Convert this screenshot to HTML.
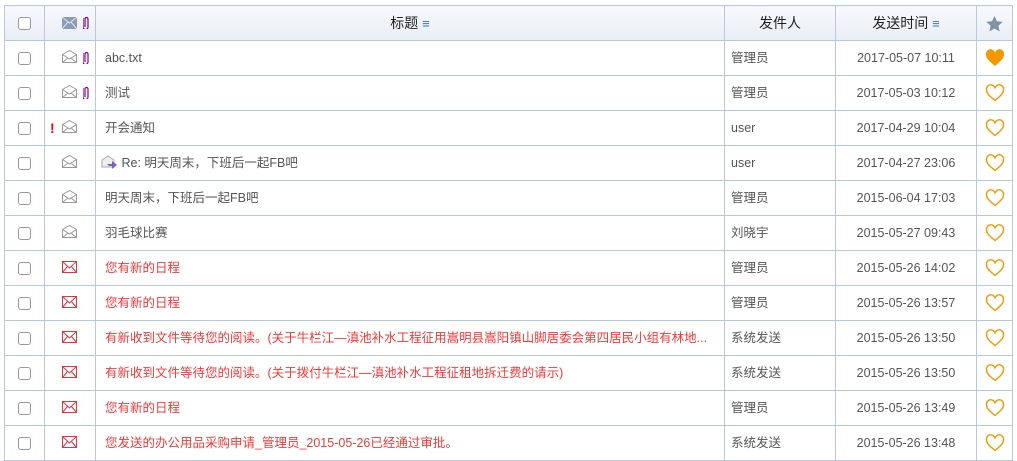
<!DOCTYPE html>
<html><head><meta charset="utf-8"><style>
body{margin:0;background:#fff;font-family:"Liberation Sans","Noto Sans CJK SC",sans-serif;font-size:12.5px;color:#555;}
table{position:absolute;left:4px;top:5px;border-collapse:collapse;table-layout:fixed;width:1009px;}
td,th{border:1px solid #b9c9dc;height:34px;padding:0;white-space:nowrap;overflow:hidden;vertical-align:middle;line-height:16px;}
th{background:linear-gradient(#f7f9fc,#e9eef5);font-weight:normal;font-size:14px;color:#222;}
.cb{display:block;margin:0 auto;width:11px;height:11px;border:1px solid #999;border-radius:3px;background:#fff}
.t{padding-left:9px}.r .t{color:#f03a3a}
.s{padding-left:6px}
.d{text-align:center}
.h{text-align:center}
.ic{position:relative}
.m{position:absolute;left:17px;top:11px}
.cl{position:absolute;left:38px;top:10px}
.ex{position:absolute;left:5px;top:9px;color:#e00;font-weight:bold;font-size:14px}
.menu{color:#3a76c4;font-size:13px}
</style></head><body>
<table>
<colgroup><col style="width:40px"><col style="width:51px"><col style="width:629px"><col style="width:111px"><col style="width:141px"><col style="width:36px"></colgroup>
<tr><th><span class="cb"></span></th><th class="ic"><svg class="m" style="left:17px;top:11px" width="15" height="12"><rect width="15" height="12" fill="#8a9bb3"/><path d="M0 0L7.5 6L15 0M0 12L6 5M15 12L9 5" stroke="#dfe6ef" fill="none"/></svg><svg class="cl" width="7" height="13"><path d="M2 11V3a1.5 1.5 0 0 1 3 0v8a2.5 2.5 0 0 1-5 0V2" stroke="#708" fill="none" stroke-width="1.2"/></svg></th><th>标题 <span class="menu">≡</span></th><th>发件人</th><th>发送时间 <span class="menu">≡</span></th><th><svg width="17" height="16" viewBox="0 0 24 23" style="vertical-align:middle"><path d="M12 0l3.5 7.6 8.3.9-6.2 5.6 1.8 8.2L12 18l-7.4 4.3 1.8-8.2L.2 8.5l8.3-.9z" fill="#8391a6"/></svg></th></tr>
</table>
<script>
var rows=[
["g",1,0,"abc.txt","管理员","2017-05-07 10:11",1],
["g",1,0,"测试","管理员","2017-05-03 10:12",0],
["g",0,1,"开会通知","user","2017-04-29 10:04",0],
["re",0,0,"Re: 明天周末，下班后一起FB吧","user","2017-04-27 23:06",0],
["g",0,0,"明天周末，下班后一起FB吧","管理员","2015-06-04 17:03",0],
["g",0,0,"羽毛球比赛","刘晓宇","2015-05-27 09:43",0],
["r",0,0,"您有新的日程","管理员","2015-05-26 14:02",0],
["r",0,0,"您有新的日程","管理员","2015-05-26 13:57",0],
["r",0,0,"有新收到文件等待您的阅读。(关于牛栏江—滇池补水工程征用嵩明县嵩阳镇山脚居委会第四居民小组有林地...","系统发送","2015-05-26 13:50",0],
["r",0,0,"有新收到文件等待您的阅读。(关于拨付牛栏江—滇池补水工程征租地拆迁费的请示)","系统发送","2015-05-26 13:50",0],
["r",0,0,"您有新的日程","管理员","2015-05-26 13:49",0],
["r",0,0,"您发送的办公用品采购申请_管理员_2015-05-26已经通过审批。","系统发送","2015-05-26 13:48",0]];
var h="";
rows.forEach(function(r){
var red=r[0]=="r",col=red?"#e8323c":"#999";
var env=red?'<svg class="m" style="top:10px" width="15" height="12"><rect x=".5" y=".5" width="14" height="11" fill="none" stroke="'+col+'"/><path d="M.5 .5L7.5 7L14.5 .5M.5 11.5L5.5 5.5M14.5 11.5L9.5 5.5" stroke="'+col+'" fill="none"/></svg>'
:'<svg class="m" style="top:9px" width="15" height="13"><path d="M.5 4.5L7.5 .5L14.5 4.5V12.5H.5Z" fill="none" stroke="'+col+'"/><path d="M.5 4.5L7.5 9L14.5 4.5M.5 12.5L6 8M14.5 12.5L9 8" stroke="'+col+'" fill="none"/></svg>';
var clip=r[1]?'<svg class="cl" width="7" height="13"><path d="M2 11V3a1.5 1.5 0 0 1 3 0v8a2.5 2.5 0 0 1-5 0V2" stroke="#808" fill="none" stroke-width="1.2"/></svg>':'';
var ex=r[2]?'<span class="ex">!</span>':'';
var ttl=r[0]=="re"?'<td class="t" style="padding-left:5px"><svg width="17" height="15" style="vertical-align:-3px"><path d="M1 5L7 1L13 5V12H1Z" fill="#eee" stroke="#aaa"/><path d="M6 9h5V6l5 4-5 4v-3H8z" fill="#7a5fc0"/></svg> '+r[3]+'</td>':'<td class="t">'+r[3]+'</td>';
var heart=r[6]?'<path d="M10 17C3 11 1 9 1 5.5A4.3 4.3 0 0 1 10 4a4.3 4.3 0 0 1 9 1.5C19 9 17 11 10 17Z" fill="#f39800"/>':'<path d="M10 16.5C3.5 11 1.5 9 1.5 5.7A3.9 3.9 0 0 1 10 4.5a3.9 3.9 0 0 1 8.5 1.2C18.5 9 16.5 11 10 16.5Z" fill="none" stroke="#f39800" stroke-width="1.4"/>';
h+='<tr class="'+(red?"r":"")+'"><td><span class="cb"></span></td><td class="ic">'+ex+env+clip+'</td>'+ttl+'<td class="s">'+r[4]+'</td><td class="d">'+r[5]+'</td><td class="h"><svg width="20" height="18" style="vertical-align:middle">'+heart+'</svg></td></tr>';
});
document.querySelector("table").insertAdjacentHTML("beforeend",h);
</script>
</body></html>
